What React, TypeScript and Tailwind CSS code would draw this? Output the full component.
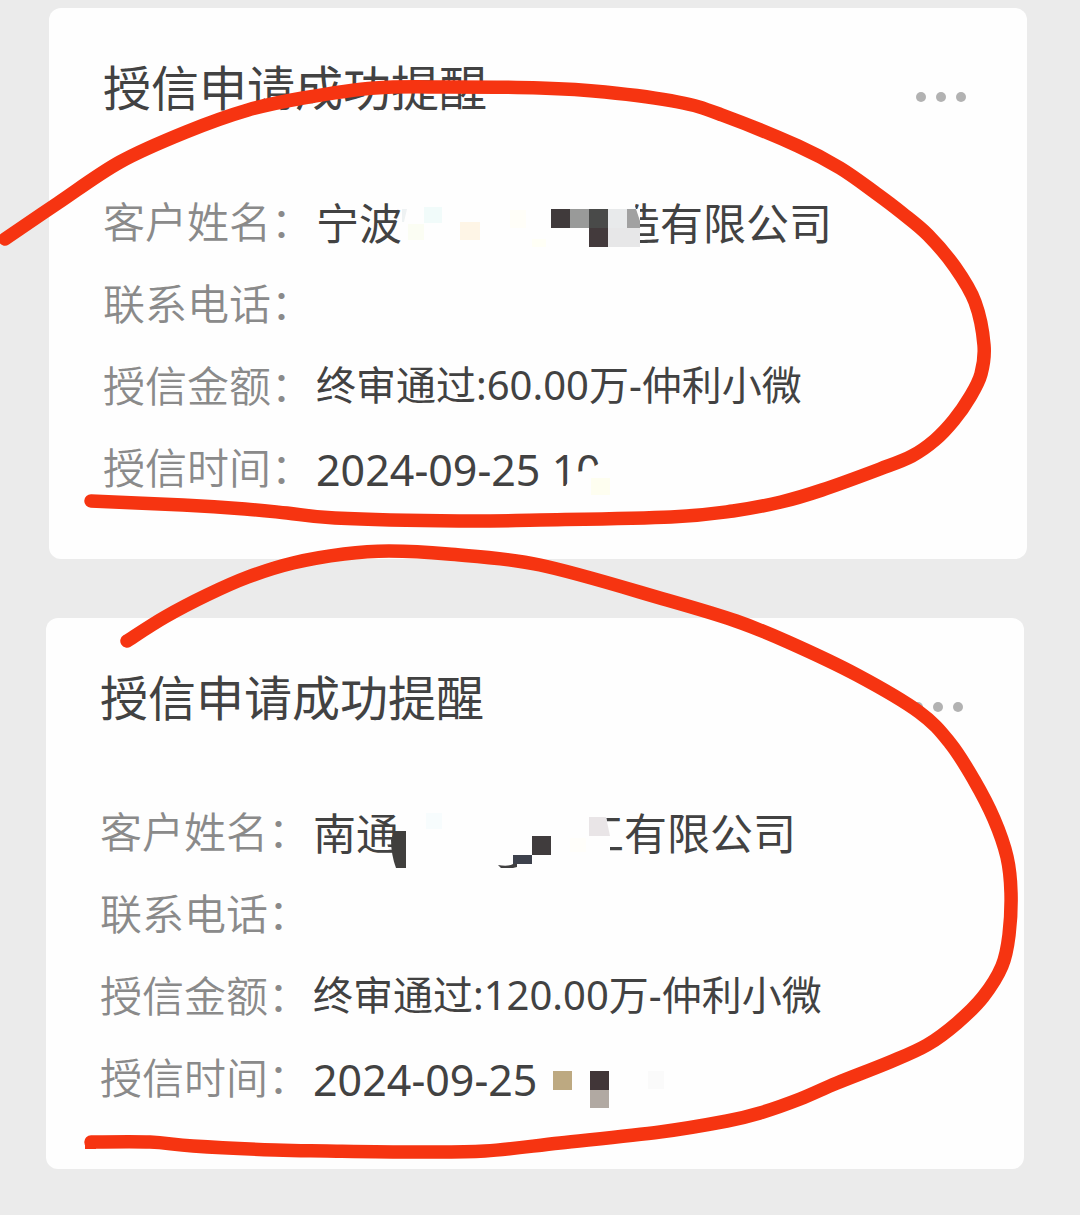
import React from 'react';

type Point = [number, number];

interface Notice {
    id: string;
    margin: string;
    rows: { label: string; value: React.ReactNode }[];
}

const MARKER_STROKES: Point[][] = [
    [
        [5, 239], [58, 203], [120, 162], [186, 132], [248, 110], [303, 98], [375, 88], [448, 87], [540, 88],
        [605, 92], [678, 102], [722, 115], [798, 146], [840, 168], [877, 194], [902, 213], [928, 235], [955, 267],
        [975, 302], [984, 345], [981, 374], [970, 397], [954, 420], [935, 440], [912, 456], [880, 469], [822, 490],
        [781, 502], [733, 511], [671, 517], [540, 520], [459, 521], [335, 518], [287, 513], [245, 509], [183, 505],
        [91, 501],
    ],
    [
        [127, 641], [165, 617], [207, 595], [248, 577], [293, 563], [344, 554], [389, 551], [448, 554], [540, 565],
        [667, 600], [736, 621], [788, 642], [857, 675], [919, 712], [950, 743], [974, 780], [994, 819], [1007, 857],
        [1011, 893], [1009, 935], [1002, 966], [983, 997], [957, 1023], [927, 1045], [890, 1062],
        [837, 1083], [800, 1099], [760, 1113], [727, 1121], [660, 1132], [560, 1143], [485, 1151], [413, 1152],
        [327, 1151], [275, 1150], [193, 1146], [150, 1142], [91, 1142],
    ],
];

// Catmull-Rom through the points, written as cubic segments
const toPath = (pts: Point[]) => {
    let d = `M${pts[0][0]} ${pts[0][1]}`;
    for (let i = 0; i < pts.length - 1; i++) {
        const a = pts[Math.max(i - 1, 0)];
        const b = pts[i];
        const c = pts[i + 1];
        const e = pts[Math.min(i + 2, pts.length - 1)];
        d += ` C${b[0] + (c[0] - a[0]) / 6} ${b[1] + (c[1] - a[1]) / 6} ${c[0] - (e[0] - b[0]) / 6} ${c[1] - (e[1] - b[1]) / 6} ${c[0]} ${c[1]}`;
    }
    return d;
};

const MosaicNingbo: React.FC = () => (
    <svg aria-hidden="true" viewBox="402 195 238 52" className="relative z-10 -mr-[23px] h-[52px] w-[238px] shrink-0">
        <path d="M606 200H633L636 209H640V247H606Z" fill="#fefefe" />
        <path d="M402 209H407L404 222H402Z" fill="#eef2f3" />
        <rect x="424" y="207" width="18" height="16" fill="#f1fbfa" />
        <rect x="408" y="224" width="16" height="16" fill="#fbfdf3" />
        <rect x="460" y="222" width="20" height="18" fill="#fef5e6" />
        <rect x="510" y="210" width="16" height="18" fill="#fffef8" />
        <rect x="532" y="239" width="14" height="8" fill="#fffff6" />
        <rect x="551" y="209" width="19" height="19" fill="#403a3b" />
        <rect x="570" y="209" width="19" height="19" fill="#999a99" />
        <rect x="589" y="209" width="19" height="19" fill="#494a49" />
        <rect x="608" y="209" width="19" height="19" fill="#e8eaeb" />
        <path d="M627 209H636L640 221V228H627Z" fill="#a1a1a1" />
        <rect x="589" y="228" width="19" height="19" fill="#433a3c" />
        <rect x="608" y="228" width="32" height="19" fill="#e7e7e8" />
    </svg>
);

const MosaicNantong: React.FC = () => (
    <svg aria-hidden="true" viewBox="390 791 220 80" className="relative z-10 -ml-[9px] -mr-[29px] h-[80px] w-[220px] shrink-0">
        <path d="M575 812H605L610 836V866H575Z" fill="#fefefe" />
        <path d="M394 831H406V868H396C393 860 391 850 391 840Z" fill="#403f3d" />
        <rect x="426" y="813" width="16" height="16" fill="#f7fcfd" />
        <path d="M498 865C504 866 510 866 513 864H517V867L513 868H501Z" fill="#403f40" />
        <rect x="513" y="855" width="19" height="9" fill="#3d414c" />
        <rect x="532" y="836" width="19" height="19" fill="#403c3d" />
        <rect x="570" y="838" width="16" height="14" fill="#fffefa" />
        <path d="M589 817H606L610 836H589Z" fill="#e9e5e7" />
    </svg>
);

const MosaicHour: React.FC = () => (
    <svg aria-hidden="true" viewBox="560 437 60 60" className="relative z-10 -ml-[41px] h-[60px] w-[60px] shrink-0">
        <path d="M560 489L564 488L569 481L575 472L584 471L593 467L600 463H611V497H560Z" fill="#fefefe" />
        <rect x="591" y="478" width="19" height="17" fill="#fefef0" />
    </svg>
);

const MosaicTime: React.FC = () => (
    <svg aria-hidden="true" viewBox="553 1045 112 64" className="ml-4 h-[64px] w-[112px] shrink-0">
        <rect x="553" y="1071" width="19" height="19" fill="#bda981" />
        <rect x="590" y="1071" width="19" height="19" fill="#413638" />
        <rect x="590" y="1090" width="19" height="18" fill="#b1a9a2" />
        <rect x="648" y="1071" width="16" height="18" fill="#fafafa" />
    </svg>
);

const Value: React.FC<{ children: React.ReactNode }> = ({ children }) => (
    <span className="pt-[6px] text-[43px]">{children}</span>
);

const NOTICES: Notice[] = [
    {
        id: 'ningbo',
        margin: 'ml-[49px] mr-[53px]',
        rows: [
            { label: '客户姓名', value: <><Value>宁波</Value><MosaicNingbo /><Value>造有限公司</Value></> },
            { label: '联系电话', value: null },
            { label: '授信金额', value: <span className="text-[40px]">终审通过:60.00万-仲利小微</span> },
            { label: '授信时间', value: <><Value>2024-09-25 10</Value><MosaicHour /></> },
        ],
    },
    {
        id: 'nantong',
        margin: 'ml-[46px] mr-[56px]',
        rows: [
            { label: '客户姓名', value: <><Value>南通</Value><MosaicNantong /><Value>工有限公司</Value></> },
            { label: '联系电话', value: null },
            { label: '授信金额', value: <span className="text-[40px]">终审通过:120.00万-仲利小微</span> },
            { label: '授信时间', value: <><Value>2024-09-25</Value><MosaicTime /></> },
        ],
    },
];

const NoticeCard: React.FC<{ notice: Notice }> = ({ notice }) => (
    <section className={`rounded-xl bg-[#fefefe] pt-12 pb-[51px] pl-[54px] pr-[61px] ${notice.margin}`}>
        <header className="flex h-16 items-end justify-between">
            <h2 className="text-[48px] leading-[64px] text-[#424242]">授信申请成功提醒</h2>
            <button type="button" aria-label="更多" className="flex h-[46px] items-center">
                <svg viewBox="0 0 50 10" className="h-[10px] w-[50px]" fill="#b2b2b2">
                    <circle cx="5" cy="5" r="5" />
                    <circle cx="25" cy="5" r="5" />
                    <circle cx="45" cy="5" r="5" />
                </svg>
            </button>
        </header>
        <dl className="mt-[60px]">
            {notice.rows.map((row) => (
                <div key={row.label} className="flex h-[82px] items-center whitespace-nowrap">
                    <dt className="w-[213px] shrink-0 text-[42px] font-[350] text-[#8a8a8a]">{row.label}：</dt>
                    <dd className="flex items-center text-[#424242]">{row.value}</dd>
                </div>
            ))}
        </dl>
    </section>
);

const App: React.FC = () => (
    <main
        lang="zh-CN"
        className="relative min-h-screen overflow-hidden bg-[#ebebeb] pt-2 pb-[46px] font-['Noto_Sans','Noto_Sans_CJK_SC',sans-serif]"
    >
        <div className="flex flex-col gap-[59px]">
            {NOTICES.map((notice) => (
                <NoticeCard key={notice.id} notice={notice} />
            ))}
        </div>
        <svg
            aria-hidden="true"
            viewBox="0 0 1080 1215"
            className="pointer-events-none absolute left-0 top-0 z-20 w-full"
            fill="none"
            stroke="#f63411"
            strokeWidth="13.5"
            strokeLinecap="round"
            strokeLinejoin="round"
        >
            {MARKER_STROKES.map((pts, i) => (
                <path key={i} d={toPath(pts)} />
            ))}
            <path d="M85 1142H96V1149H85Z" fill="#f63411" stroke="none" />
        </svg>
    </main>
);

export default App;
